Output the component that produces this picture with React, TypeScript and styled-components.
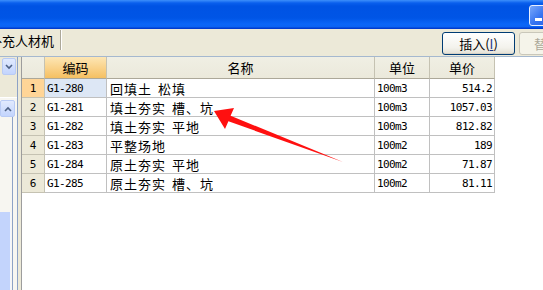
import React from "react";
import styled, { createGlobalStyle } from "styled-components";

const GlobalStyle = createGlobalStyle`
  html, body { margin: 0; padding: 0; background: #fff; }
  body { font-family: "Noto Sans CJK SC", sans-serif; font-size: 13px; color: #000; }
`;

const cjk = `"Noto Sans CJK SC", sans-serif`;
const mono = `"DejaVu Sans Mono", "Liberation Mono", monospace`;

const Window = styled.div`
  position: relative;
  width: 543px;
  height: 290px;
  overflow: hidden;
  display: flex;
  flex-direction: column;
  background: #ece9d8;
`;

const TitleBar = styled.div`
  height: 29px;
  flex: none;
  display: flex;
  justify-content: flex-end;
  align-items: flex-start;
  padding-top: 5px;
  box-sizing: border-box;
  background: linear-gradient(
    to bottom,
    #3d8ffb 0px,
    #0a5fed 3px,
    #0053e4 6px,
    #0055e6 18px,
    #0a66f8 24px,
    #0b63f3 27px,
    #003ccf 28px,
    #003ccf 29px
  );
`;

const MinButton = styled.div`
  position: relative;
  width: 21px;
  height: 21px;
  margin-right: -7px;
  box-sizing: border-box;
  border: 1px solid #e8efff;
  border-radius: 3px;
  background: linear-gradient(135deg, #79a8fb, #3573f1 55%, #2a66e6);

  &::after {
    content: "";
    position: absolute;
    left: 5px;
    bottom: 4px;
    width: 7px;
    height: 3px;
    background: #fff;
  }
`;

const Toolbar = styled.div`
  height: 28px;
  flex: none;
  display: flex;
  align-items: flex-start;
  overflow: hidden;
  box-sizing: border-box;
  border-bottom: 1px solid #a5b8cf;
`;

const Tab = styled.div`
  width: 60px;
  height: 20px;
  margin-top: 1px;
  flex: none;
  display: flex;
  align-items: center;
  overflow: hidden;
  white-space: nowrap;
  font-family: ${cjk};
  font-size: 13px;
  border-right: 1px solid #aca899;
  box-shadow: 1px 0 0 #fff;
`;

const TabText = styled.span`
  margin-left: -11px;
`;

const Buttons = styled.div`
  margin-left: auto;
  margin-right: -49px;
  margin-top: 3px;
  display: flex;
  gap: 4px;
`;

const Button = styled.div<{ $off?: boolean }>`
  width: 73px;
  height: 23px;
  flex: none;
  box-sizing: border-box;
  display: flex;
  align-items: center;
  justify-content: center;
  font-family: ${cjk};
  font-size: 13px;
  border-radius: 3px;
  border: 1px solid ${(p) => (p.$off ? "#c9c7ba" : "#003c74")};
  color: ${(p) => (p.$off ? "#aca899" : "#000")};
  background: ${(p) =>
    p.$off
      ? "#f5f4ea"
      : "linear-gradient(to bottom, #ffffff, #f3f2ec 70%, #e3e0d4)"};
  box-shadow: ${(p) => (p.$off ? "none" : "inset 0 -1px 0 #d6d0c5")};
`;

const Key = styled.span`
  text-decoration: underline;
  color: #1f3a8a;
`;

const Body = styled.div`
  flex: 1;
  min-height: 0;
  display: flex;
`;

const Side = styled.div`
  width: 17px;
  flex: none;
  display: flex;
  flex-direction: column;
  border-right: 1px solid #8da2c6;
`;

const SideTop = styled.div`
  height: 40px;
  flex: none;
  padding: 1px 0 0 2px;
  box-sizing: border-box;
`;

const XpArrowButton = styled.div<{ $w: number }>`
  width: ${(p) => p.$w}px;
  height: 17px;
  box-sizing: border-box;
  display: flex;
  align-items: center;
  justify-content: center;
  border: 1px solid #b9cbf5;
  border-radius: 2px;
  background: linear-gradient(to bottom, #e1eafe, #c3d4fd);
`;

const SideBottom = styled.div`
  flex: 1;
  min-height: 0;
  display: flex;
  flex-direction: column;
  padding-top: 2px;
  border-top: 1px solid #fff;
  background: #f7f6f1;
`;

const Track = styled.div`
  flex: 1;
  display: flex;
  flex-direction: column;
  padding-top: 95px;
  border-right: 1px solid #8da2c6;
  width: 12px;
`;

const Thumb = styled.div`
  flex: 1;
  width: 10px;
  background: #c3d4fc;
  border-right: 1px solid #f3f6ff;
`;

const Splitter = styled.div`
  width: 3px;
  flex: none;
`;

const GridArea = styled.div`
  flex: 1;
  background: #fff;
  border-left: 1px solid #9d9d9d;
`;

const Table = styled.div`
  display: grid;
  grid-template-columns: 23px 62px 268px 55px 65px;
  grid-template-rows: 22px;
  grid-auto-rows: 19px;
  width: max-content;
`;

const HeadCell = styled.div<{ $sel?: boolean }>`
  box-sizing: border-box;
  display: flex;
  align-items: center;
  justify-content: center;
  font-family: ${cjk};
  font-size: 13px;
  border-right: 1px solid #c5c2b2;
  border-bottom: 1px solid #aca899;
  background: ${(p) =>
    p.$sel
      ? "linear-gradient(to bottom, #fde6b4, #f9cf83 60%, #f5c062)"
      : "linear-gradient(to bottom, #f0efe4, #ebe9db)"};
`;

const RowHead = styled.div<{ $sel?: boolean }>`
  box-sizing: border-box;
  display: flex;
  align-items: center;
  justify-content: center;
  font-family: ${mono};
  font-size: 11px;
  border-right: 1px solid #c5c2b2;
  border-bottom: 1px solid #c5c2b2;
  background: ${(p) => (p.$sel ? "#ffd597" : "#ece9d8")};
`;

const Cell = styled.div<{ $mono?: boolean; $right?: boolean; $sel?: boolean }>`
  box-sizing: border-box;
  display: flex;
  align-items: center;
  justify-content: ${(p) => (p.$right ? "flex-end" : "flex-start")};
  padding: ${(p) => (p.$right ? "0 2px 0 0" : p.$mono ? "0 0 0 2px" : "0 0 0 3px")};
  white-space: pre;
  font-family: ${(p) => (p.$mono ? mono : cjk)};
  font-size: ${(p) => (p.$mono ? "11px" : "13px")};
  letter-spacing: ${(p) => (p.$mono ? "-0.6px" : "1px")};
  word-spacing: 2px;
  border-right: 1px solid #c0c0c0;
  border-bottom: 1px solid #c0c0c0;
  background: ${(p) => (p.$sel ? "#dde7f5" : "#fff")};
`;

const Overlay = styled.svg`
  position: absolute;
  left: 0;
  top: 0;
  pointer-events: none;
`;

const rows = [
  { code: "G1-280", name: "回填土 松填", unit: "100m3", price: "514.2" },
  { code: "G1-281", name: "填土夯实 槽、坑", unit: "100m3", price: "1057.03" },
  { code: "G1-282", name: "填土夯实 平地", unit: "100m3", price: "812.82" },
  { code: "G1-283", name: "平整场地", unit: "100m2", price: "189" },
  { code: "G1-284", name: "原土夯实 平地", unit: "100m2", price: "71.87" },
  { code: "G1-285", name: "原土夯实 槽、坑", unit: "100m2", price: "81.11" },
];

const Chevron = ({ up }: { up?: boolean }) => (
  <svg width="8" height="6" viewBox="0 0 8 6">
    <polyline
      points={up ? "1,5 4,2 7,5" : "1,1 4,4 7,1"}
      fill="none"
      stroke="#4d6185"
      strokeWidth="1.6"
    />
  </svg>
);

export default function App() {
  return (
    <>
      <GlobalStyle />
      <Window>
        <TitleBar>
          <MinButton />
        </TitleBar>
        <Toolbar>
          <Tab>
            <TabText>补充人材机</TabText>
          </Tab>
          <Buttons>
            <Button>
              插入(<Key>I</Key>)
            </Button>
            <Button $off>替换(R)</Button>
          </Buttons>
        </Toolbar>
        <Body>
          <Side>
            <SideTop>
              <XpArrowButton $w={14}>
                <Chevron />
              </XpArrowButton>
            </SideTop>
            <SideBottom>
              <XpArrowButton $w={15}>
                <Chevron up />
              </XpArrowButton>
              <Track>
                <Thumb />
              </Track>
            </SideBottom>
          </Side>
          <Splitter />
          <GridArea>
            <Table>
              <HeadCell />
              <HeadCell $sel>编码</HeadCell>
              <HeadCell>名称</HeadCell>
              <HeadCell>单位</HeadCell>
              <HeadCell>单价</HeadCell>
              {rows.map((r, i) => (
                <React.Fragment key={r.code}>
                  <RowHead $sel={i === 0}>{i + 1}</RowHead>
                  <Cell $mono $sel={i === 0}>{r.code}</Cell>
                  <Cell>{r.name}</Cell>
                  <Cell $mono>{r.unit}</Cell>
                  <Cell $mono $right>{r.price}</Cell>
                </React.Fragment>
              ))}
            </Table>
          </GridArea>
        </Body>
        <Overlay width="543" height="290" viewBox="0 0 543 290">
          <polygon
            points="214,111 234,108 230.6,115.7 343,162 228.4,121.3 225,129"
            fill="#ff1010"
          />
        </Overlay>
      </Window>
    </>
  );
}
